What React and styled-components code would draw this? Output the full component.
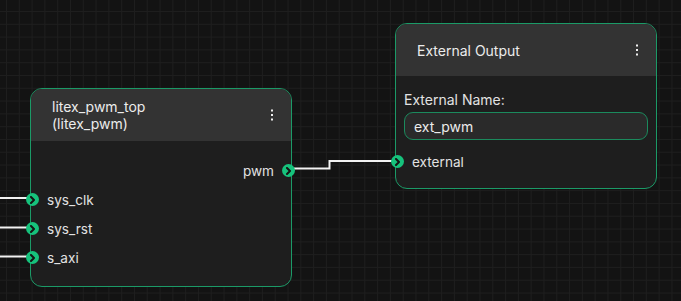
import React from 'react';
import styled, { createGlobalStyle } from 'styled-components';

const GlobalStyle = createGlobalStyle`
  html, body {
    margin: 0;
    padding: 0;
    background: #131313;
  }
  body {
    font-family: Inter, "Open Sans", sans-serif;
  }
`;

const Canvas = styled.div`
  position: relative;
  width: 681px;
  height: 301px;
  overflow: hidden;
  background-color: #131313;
  background-image:
    linear-gradient(to right, #1e1e1e 1px, transparent 1px),
    linear-gradient(to bottom, #1e1e1e 1px, transparent 1px);
  background-size: 12.8px 12.8px;
  background-position: 6px 11px;
`;

const Edges = styled.svg`
  position: absolute;
  left: 0;
  top: 0;
  pointer-events: none;
`;

const Node = styled.div`
  position: absolute;
  box-sizing: border-box;
  width: 262px;
  border: 1px solid #1b9a67;
  border-radius: 12px;
  background: #1e1e1e;
  color: #e4e4e4;
`;

const Header = styled.div`
  display: flex;
  align-items: center;
  justify-content: space-between;
  height: 52px;
  padding: 0 17px 0 21px;
  background: #333333;
  border-radius: 11px 11px 0 0;
  font-size: 14px;
  line-height: 17px;
  color: #ececec;
`;

const Title = styled.div`
  white-space: pre-line;
`;

const Body = styled.div`
  padding: ${(p) => p.$pad};
`;

const FieldLabel = styled.div`
  font-size: 14px;
  line-height: 20px;
  color: #e2e2e2;
`;

const Input = styled.div`
  box-sizing: border-box;
  height: 28px;
  margin-top: 2px;
  padding-left: 9px;
  display: flex;
  align-items: center;
  border: 1px solid #1b8a5d;
  border-radius: 9px;
  background: #2a2a2a;
  font-size: 14px;
  color: #ececec;
`;

const PortRow = styled.div`
  position: relative;
  display: flex;
  align-items: center;
  justify-content: ${(p) => (p.$side === 'right' ? 'flex-end' : 'flex-start')};
  height: 29px;
  margin: ${(p) => p.$margin || '0'};
  padding: ${(p) => (p.$side === 'right' ? '0 17px 0 0' : '0 0 0 16px')};
  font-size: 13.6px;
  color: #e2e2e2;
`;

const Handle = styled.span`
  position: absolute;
  top: 8px;
  ${(p) => (p.$side === 'right' ? 'right: -4px;' : 'left: -5px;')}
  width: 13px;
  height: 13px;
  border-radius: 50%;
  background: #16c27c;
  display: flex;
  align-items: center;
  justify-content: center;
`;

const Chevron = () => (
  <svg width="7" height="8" viewBox="0 0 7 8">
    <path d="M2 1 L5 4 L2 7" fill="none" stroke="#141414" strokeWidth="2" strokeLinecap="round" strokeLinejoin="round" />
  </svg>
);

const Kebab = () => (
  <svg width="4" height="12" viewBox="0 0 4 12">
    <rect x="1" y="0.5" width="2" height="2" fill="#f0f0f0" />
    <rect x="1" y="5" width="2" height="2" fill="#f0f0f0" />
    <rect x="1" y="9.5" width="2" height="2" fill="#f0f0f0" />
  </svg>
);

const Port = ({ side, label, margin }) => (
  <PortRow $side={side} $margin={margin}>
    <Handle $side={side}>
      <Chevron />
    </Handle>
    {label}
  </PortRow>
);

export default function App() {
  return (
    <>
      <GlobalStyle />
      <Canvas>
        <Edges width="681" height="301">
          <g fill="none" stroke="#f2f2f2" strokeWidth="2">
            <path d="M0 198 H28" />
            <path d="M0 227.5 H28" />
            <path d="M0 256.5 H28" />
            <path d="M294 168.5 H329.5 V161 H392" />
          </g>
        </Edges>

        <Node style={{ left: 30, top: 88 }}>
          <Header>
            <Title>{'litex_pwm_top\n(litex_pwm)'}</Title>
            <Kebab />
          </Header>
          <Body $pad="15px 0 14px">
            <Port side="right" label="pwm" />
            <Port side="left" label="sys_clk" />
            <Port side="left" label="sys_rst" />
            <Port side="left" label="s_axi" />
          </Body>
        </Node>

        <Node style={{ left: 395, top: 23 }}>
          <Header>
            <Title>External Output</Title>
            <Kebab />
          </Header>
          <Body $pad="14px 8px 12px">
            <FieldLabel>External Name:</FieldLabel>
            <Input>ext_pwm</Input>
            <Port side="left" label="external" margin="7px -8px 0" />
          </Body>
        </Node>
      </Canvas>
    </>
  );
}
